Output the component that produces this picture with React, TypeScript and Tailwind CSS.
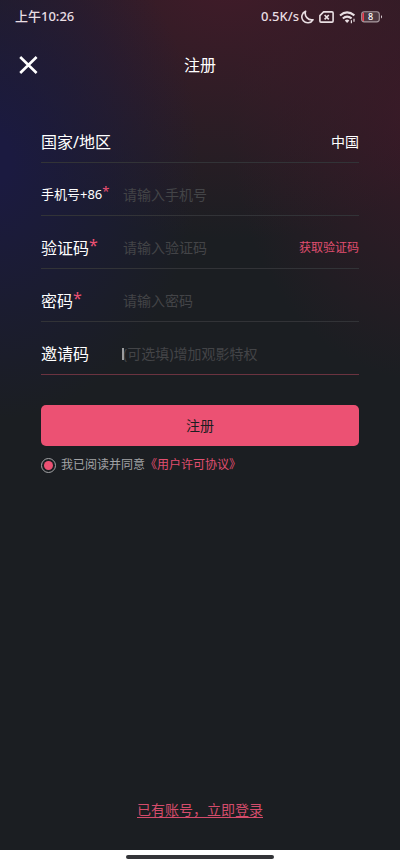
import React, { useState } from 'react';

interface FieldProps {
  id: string;
  label: string;
  placeholder: string;
  type?: string;
  required?: boolean;
  small?: boolean;
  active?: boolean;
  children?: React.ReactNode;
}

const Field: React.FC<FieldProps> = ({ id, label, placeholder, type = 'text', required, small, active, children }) => (
  <div className={`flex h-[53px] items-center border-b pt-3 ${active ? 'border-[#6b3340]' : 'border-[#323337]'}`}>
    <label
      htmlFor={id}
      className={`w-[82px] shrink-0 whitespace-nowrap text-white ${small ? 'text-[13px]' : 'text-base'}`}
    >
      {label}
      {required && <span className="align-[3px] leading-none text-[#ec5173]">*</span>}
    </label>
    <div className="relative flex min-w-0 flex-1 items-center">
      {active && <span className="absolute -left-px h-3 w-0.5 bg-[#9a9b9d]" />}
      <input
        id={id}
        type={type}
        placeholder={placeholder}
        className="w-full min-w-0 bg-transparent text-sm text-white outline-none placeholder:text-[#434447]"
      />
    </div>
    {children}
  </div>
);

const StatusIcons = () => (
  <div className="flex items-center gap-[5px]">
    <svg width="13" height="14" viewBox="0 0 13 14" fill="none" stroke="#e9dfe3" strokeWidth="1.6" strokeLinejoin="round">
      <path d="M4.6 1.2A6 6 0 1 0 12 9.8A6.6 6.6 0 0 1 4.6 1.2Z" />
    </svg>
    <svg width="15" height="12" viewBox="0 0 15 12" fill="none" stroke="#e9dfe3" strokeWidth="1.6">
      <path d="M4.6 0.9H13Q14.1 0.9 14.1 2V10Q14.1 11.1 13 11.1H2Q0.9 11.1 0.9 10V4.6Z" strokeLinejoin="round" />
      <path d="M5.6 4L9.8 8.4M9.8 4L5.6 8.4" />
    </svg>
    <svg width="17" height="13" viewBox="0 0 17 13" fill="none" stroke="#e9dfe3" strokeWidth="2">
      <path d="M1 4.4Q8 -1.6 15.4 4.4" />
      <path d="M3.8 7.4Q8 3.8 12.6 7.4" />
      <path d="M5.8 9.4Q8 7.8 10.4 9.4L8.1 12Z" fill="#e9dfe3" stroke="none" />
      <path d="M12.4 9.2V12.2M15 7.8V10.8" strokeWidth="1.2" />
    </svg>
    <svg width="22" height="12" viewBox="0 0 22 12">
      <rect x="0.7" y="0.7" width="17.6" height="10.2" rx="2.6" fill="#4d3841" stroke="#a99aa0" strokeWidth="1.1" />
      <path d="M1.4 3Q1.4 1.4 3 1.4V10.2Q1.4 10.2 1.4 8.6Z" fill="#ee3f50" />
      <path d="M20 4Q22 5.8 20 7.6Z" fill="#e9dfe3" />
      <text x="9.5" y="9" textAnchor="middle" fontSize="9" fontWeight="500" fill="#fff">8</text>
    </svg>
  </div>
);

export default function App() {
  const [agreed, setAgreed] = useState(true);

  return (
    <div className="flex min-h-screen flex-col bg-[#1b1e22] font-['Noto_Sans','Noto_Sans_CJK_SC',sans-serif]">
      <div className="flex flex-1 flex-col bg-[radial-gradient(ellipse_210px_260px_at_-10px_160px,#1b1a40_10%,#1b1a4000_100%),radial-gradient(ellipse_320px_270px_at_230px_-30px,#421b29_0%,#421b2900_100%),radial-gradient(ellipse_190px_260px_at_420px_120px,#341a26_10%,#341a2600_100%)]">
        <div className="flex h-[34px] items-center justify-between pl-[15px] pr-[17px] text-[#e9dfe3]">
          <span className="text-[13px] font-medium">上午10:26</span>
          <div className="flex items-center gap-0.5">
            <span className="text-[13px] font-medium">0.5K/s</span>
            <StatusIcons />
          </div>
        </div>

        <header className="grid h-[62px] grid-cols-[1fr_auto_1fr] items-center px-[19px]">
          <button type="button" aria-label="关闭" className="w-fit text-white">
            <svg width="19" height="18" viewBox="0 0 19 18" stroke="currentColor" strokeWidth="2.6">
              <path d="M1.2 1L17.6 17M17.6 1L1.2 17" />
            </svg>
          </button>
          <h1 className="text-base text-white">注册</h1>
        </header>

        <form className="flex flex-col px-[41px] pt-3.5" onSubmit={(e) => e.preventDefault()}>
          <div className="flex h-[53px] items-center justify-between border-b border-[#323337] pt-3 text-white">
            <span className="text-base">国家/地区</span>
            <button type="button" className="text-sm">中国</button>
          </div>
          <Field id="phone" label="手机号+86" placeholder="请输入手机号" type="tel" required small />
          <Field id="code" label="验证码" placeholder="请输入验证码" required>
            <button type="button" className="shrink-0 text-xs text-[#e04f70]">获取验证码</button>
          </Field>
          <Field id="password" label="密码" placeholder="请输入密码" type="password" required />
          <Field id="invite" label="邀请码" placeholder="(可选填)增加观影特权" active />

          <button type="submit" className="mt-[30px] h-[41px] rounded-[5px] bg-[#ec5173] text-sm text-[#1b1e22]">
            注册
          </button>

          <div className="mt-[11px] flex items-center text-xs text-[#a3a4a6]">
            <input
              id="agree"
              type="radio"
              checked={agreed}
              onChange={() => setAgreed(true)}
              className="mr-[5px] size-[15px] appearance-none rounded-full border border-[#a3a4a6] bg-clip-content p-0.5 checked:bg-[#ec5173]"
            />
            <label htmlFor="agree">我已阅读并同意</label>
            <a href="#agreement" className="text-[#e04f70]">《用户许可协议》</a>
          </div>
        </form>

        <div className="mt-auto flex justify-center pb-[30px]">
          <a href="#login" className="text-sm text-[#d44c6b] underline underline-offset-2">已有账号，立即登录</a>
        </div>
      </div>

      <div className="flex h-4 justify-center bg-white pt-[5px]">
        <div className="h-1 w-[148px] rounded-full bg-[#333438]" />
      </div>
    </div>
  );
}
